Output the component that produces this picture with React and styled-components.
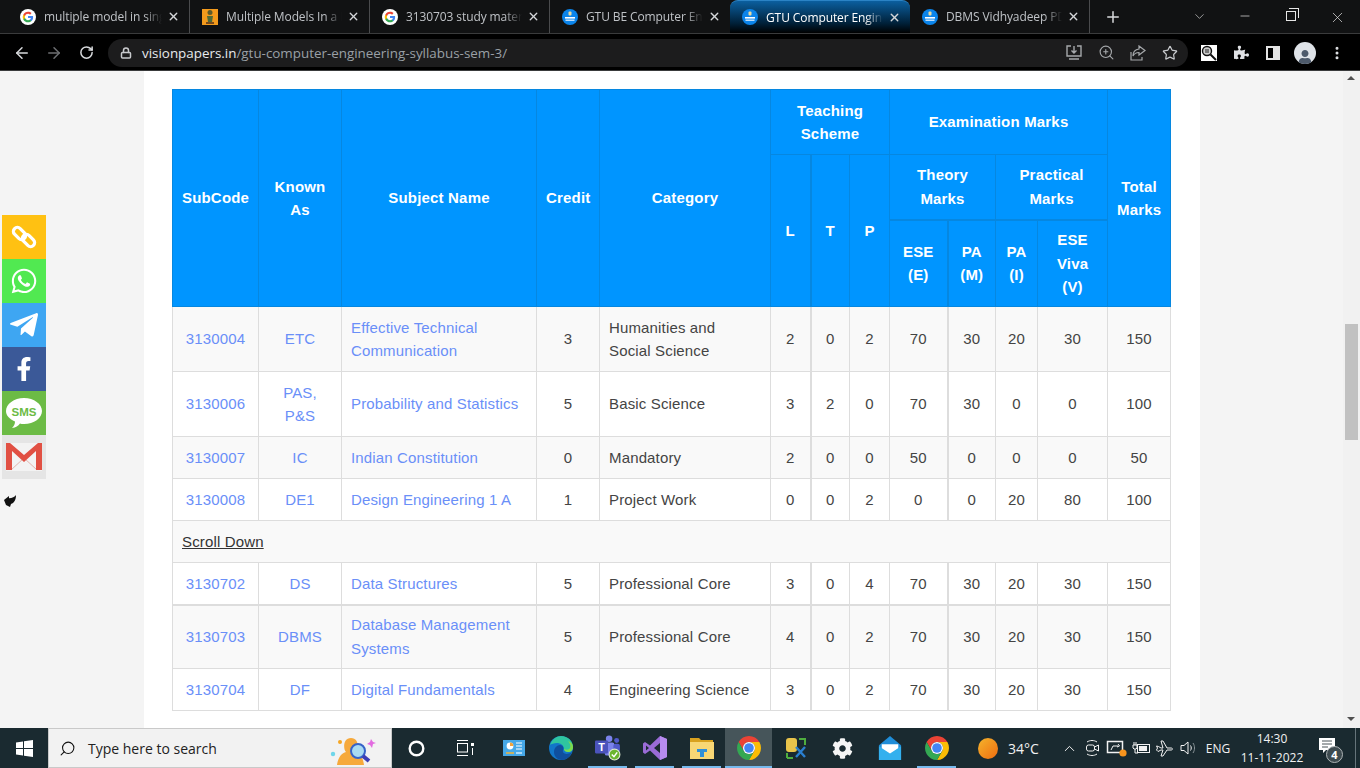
import React from 'react';
import styled, { createGlobalStyle } from 'styled-components';
import {
  ArrowLeft, ArrowRight, RotateCw, Lock, ZoomIn, Star, MoreVertical,
  ChevronUp, ChevronDown, Minus, X, Plus, Search,
} from 'lucide-react';
import { FaWhatsapp, FaTelegramPlane, FaFacebookF, FaPuzzlePiece, FaUser, FaCog } from 'react-icons/fa';

const GlobalStyle = createGlobalStyle`
  html, body { margin: 0; padding: 0; height: 100%; overflow: hidden; }
  body { font-family: "Liberation Sans", Arial, sans-serif; }
  * { box-sizing: border-box; }
`;

const Shell = styled.div`
  display: flex;
  flex-direction: column;
  width: 1360px;
  height: 768px;
`;

/* browser chrome */
const TabBar = styled.div`
  display: flex;
  align-items: stretch;
  height: 34px;
  padding-left: 10px;
  background: #111213;
  border-bottom: 1px solid #3a3b3c;
  font-family: "Open Sans", sans-serif;
`;

const Tab = styled.div`
  position: relative;
  display: flex;
  align-items: center;
  width: 180px;
  height: 33px;
  padding-left: ${p => (p.$first ? 10 : 12)}px;
  padding-right: 9px;
  color: ${p => (p.$active ? '#ffffff' : '#bfc2c6')};
  font-size: 12px;
  letter-spacing: -0.1px;
  background: ${p => (p.$active ? 'linear-gradient(#0b5f9f, #002038 70%, #000)' : 'transparent')};
  border-top: ${p => (p.$active ? '1px solid #2b83c5' : 'none')};
  border-radius: ${p => (p.$active ? '8px 8px 0 0' : '0')};
  border-right: ${p => (p.$sep ? '1px solid #4a4b4d' : 'none')};
`;

const TabIcon = styled.span`
  display: flex;
  width: 16px;
  height: 16px;
  margin-right: 8px;
  flex: none;
`;

const TabTitle = styled.span`
  flex: 1;
  min-width: 0;
  margin-right: 5px;
  overflow: hidden;
  white-space: nowrap;
  -webkit-mask-image: linear-gradient(to right, #000 85%, transparent);
  mask-image: linear-gradient(to right, #000 85%, transparent);
`;

const TabClose = styled.span`
  display: flex;
  flex: none;
  color: #d5d7da;
`;

const NewTab = styled.span`
  display: flex;
  align-items: center;
  margin-left: 14px;
  color: #d8dadd;
`;

const WindowControls = styled.div`
  display: flex;
  align-items: flex-start;
  margin-left: auto;
  color: #e6e6e6;
`;

const WinButton = styled.span`
  display: flex;
  justify-content: center;
  width: 46px;
  padding-top: 9px;
`;

const RestoreIcon = styled.span`
  position: relative;
  display: block;
  width: 10px;
  height: 10px;
  margin-top: 2px;
  border: 1px solid #e6e6e6;
  &::after {
    content: "";
    position: absolute;
    top: -4px;
    right: -4px;
    width: 9px;
    height: 9px;
    border-top: 1px solid #e6e6e6;
    border-right: 1px solid #e6e6e6;
  }
`;

const Toolbar = styled.div`
  display: flex;
  align-items: center;
  height: 37px;
  padding: 1px 0 0 6px;
  background: #000;
  border-bottom: 1px solid #3a3b3c;
  color: #d8dadd;
`;

const NavButton = styled.span`
  display: flex;
  justify-content: center;
  width: 32px;
  color: ${p => (p.$dim ? '#6d6f72' : '#d8dadd')};
`;

const Omnibox = styled.div`
  display: flex;
  align-items: center;
  flex: none;
  width: 1080px;
  height: 28px;
  margin-left: 6px;
  padding: 0 7px 0 12px;
  border-radius: 14px;
  background: #1c1c1d;
  font-family: "Open Sans", sans-serif;
  font-size: 13.4px;
  color: #9aa0a6;
`;

const Host = styled.span`
  color: #e8eaed;
`;

const Url = styled.span`
  margin-left: 10px;
  white-space: nowrap;
`;

const OmniIcons = styled.div`
  display: flex;
  align-items: center;
  gap: 10px;
  margin-left: auto;
  color: #a5a8ab;
`;

const OmniIcon = styled.span`
  display: flex;
  justify-content: center;
  width: 22px;
`;

const ToolIcons = styled.div`
  display: flex;
  align-items: center;
  margin-left: 5px;
`;

const ToolIcon = styled.span`
  display: flex;
  justify-content: center;
  align-items: center;
  width: 32px;
  color: #dfe1e4;
`;

const SidePanelIcon = styled.span`
  display: block;
  width: 14px;
  height: 14px;
  border: 2px solid #e3e3e3;
  background: linear-gradient(to right, #000 50%, #e3e3e3 50%);
`;

const Avatar = styled.span`
  display: flex;
  align-items: flex-end;
  justify-content: center;
  width: 22px;
  height: 22px;
  overflow: hidden;
  border-radius: 50%;
  background: #dfe3e8;
  color: #4d5a6b;
`;

/* page */
const Main = styled.div`
  position: relative;
  display: flex;
  flex: 1;
  min-height: 0;
  background: #f4f4f4;
`;

const Gutter = styled.div`
  flex: ${p => (p.$grow ? 1 : 'none')};
  width: 144px;
`;

const Content = styled.div`
  width: 1056px;
  padding: 18px 30px 0 28px;
  background: #fff;
  overflow: hidden;
`;

const Table = styled.table`
  width: 998px;
  table-layout: fixed;
  border-collapse: collapse;
  font-size: 15px;
  line-height: 23.5px;
  color: #444;
`;

const HeadRow = styled.tr`
  height: ${p => p.$h}px;
`;

const Th = styled.th`
  padding: ${p => (p.$heavyTop ? '7.5px 9px' : '8px 9px')};
  background: #0095ff;
  color: #fff;
  font-weight: 700;
  text-align: center;
  vertical-align: middle;
  border: 1px solid #0687e0;
  ${p => p.$heavyLeft && 'border-left-width: 2px;'}
  ${p => p.$heavyTop && 'border-top-width: 2px;'}
  letter-spacing: 0.18px;
`;

const Tr = styled.tr`
  height: ${p => p.$h}px;
  background: ${p => (p.$odd ? '#f9f9f9' : '#fff')};
  ${p => p.$heavy && 'border-top: 2px solid #dddddd;'}
`;

const Td = styled.td`
  padding: ${p => (p.$left ? '0 10px 0 9px' : '0 9px')};
  text-align: ${p => (p.$left ? 'left' : 'center')};
  vertical-align: middle;
  border: 1px solid #dddddd;
  ${p => p.$heavyLeft && 'border-left-width: 2px;'}
  letter-spacing: 0.15px;
`;

const SubjectLink = styled.a`
  color: #6a8ff8;
  text-decoration: none;
`;

const ScrollLink = styled.a`
  color: #333;
  text-decoration: underline;
`;

const ShareBar = styled.div`
  position: absolute;
  left: 2px;
  top: 144px;
  display: flex;
  flex-direction: column;
  width: 44px;
`;

const ShareButton = styled.span`
  display: flex;
  align-items: center;
  justify-content: center;
  height: 44px;
  background: ${p => p.$bg};
  color: #fff;
`;

const HideArrow = styled.span`
  position: absolute;
  left: 4px;
  top: 424px;
  display: flex;
`;

const Scrollbar = styled.div`
  position: relative;
  width: 17px;
  background: #f1f1f1;
`;

const Thumb = styled.div`
  position: absolute;
  left: 2px;
  top: 253px;
  width: 13px;
  height: 116px;
  background: #c1c1c1;
`;

const ScrollArrow = styled.span`
  position: absolute;
  left: 4px;
  ${p => (p.$up ? 'top: 5px;' : 'bottom: 7px;')}
  border-left: 4px solid transparent;
  border-right: 4px solid transparent;
  ${p => (p.$up ? 'border-bottom: 4px solid #505050;' : 'border-top: 4px solid #505050;')}
`;

/* taskbar */
const Taskbar = styled.div`
  display: flex;
  align-items: stretch;
  height: 40px;
  background: #1a2a30;
  color: #f2f2f2;
  font-family: "Open Sans", sans-serif;
  & > * { flex: none; }
`;

const StartButton = styled.span`
  display: flex;
  align-items: center;
  justify-content: center;
  width: 48px;
`;

const SearchBox = styled.div`
  display: flex;
  align-items: center;
  width: 344px;
  padding-left: 10px;
  background: #f2f2f2;
  border: 1px solid #c9c9c9;
  color: #222;
  font-size: 14px;
`;

const SearchText = styled.span`
  margin-left: 12px;
`;

const SearchArt = styled.span`
  display: flex;
  margin-left: auto;
  margin-right: 10px;
`;

const TaskSlot = styled.span`
  position: relative;
  display: flex;
  align-items: center;
  justify-content: center;
  width: ${p => p.$w || 47}px;
  background: ${p => (p.$active ? '#46555a' : 'transparent')};
  &::after {
    content: "";
    display: ${p => (p.$running ? 'block' : 'none')};
    position: absolute;
    left: ${p => (p.$active ? 0 : 4)}px;
    right: ${p => (p.$active ? 0 : 4)}px;
    bottom: 0;
    height: 2px;
    background: #76b9ed;
  }
`;

const Weather = styled.span`
  display: flex;
  align-items: center;
  gap: 10px;
  width: 97px;
  padding-left: 18px;
  font-size: 14px;
`;

const SunDot = styled.span`
  display: block;
  width: 20px;
  height: 21px;
  border-radius: 50%;
  background: linear-gradient(135deg, #f4b42c, #ef6c10);
`;

const Tray = styled.span`
  display: flex;
  align-items: center;
  justify-content: center;
  width: 24px;
  color: #f2f2f2;
`;

const Lang = styled.span`
  width: 34px;
  text-align: center;
  font-size: 12px;
  align-self: center;
`;

const Clock = styled.span`
  display: flex;
  flex-direction: column;
  justify-content: center;
  width: 74px;
  text-align: center;
  font-size: 12px;
  line-height: 19px;
  white-space: nowrap;
`;

const Notify = styled.span`
  position: relative;
  display: flex;
  align-items: center;
  width: 46px;
  padding: 0 0 4px 10px;
`;

const NotifyBadge = styled.span`
  position: absolute;
  left: 17px;
  top: 18px;
  width: 17px;
  height: 17px;
  border-radius: 50%;
  background: #3d4a4f;
  border: 1px solid #aeb4b6;
  color: #fff;
  font-size: 11px;
  font-weight: 700;
  line-height: 15px;
  text-align: center;
`;

const ShowDesktop = styled.span`
  width: 5px;
  border-left: 1px solid #66747a;
`;

/* drawn icons */
const GoogleG = () => (
  <svg width="16" height="16" viewBox="0 0 24 24">
    <circle cx="12" cy="12" r="12" fill="#fff" />
    <g transform="translate(3.4 3.4) scale(.72)">
      <path fill="#4285F4" d="M22.56 12.25c0-.78-.07-1.53-.2-2.25H12v4.26h5.92c-.26 1.37-1.04 2.53-2.21 3.31v2.77h3.57c2.08-1.92 3.28-4.74 3.28-8.09z" />
      <path fill="#34A853" d="M12 23c2.97 0 5.46-.98 7.28-2.66l-3.57-2.77c-.98.66-2.23 1.06-3.71 1.06-2.86 0-5.29-1.93-6.16-4.53H2.18v2.84C3.99 20.53 7.7 23 12 23z" />
      <path fill="#FBBC05" d="M5.84 14.09c-.22-.66-.35-1.36-.35-2.09s.13-1.43.35-2.09V7.07H2.18C1.43 8.55 1 10.22 1 12s.43 3.45 1.18 4.93l3.66-2.84z" />
      <path fill="#EA4335" d="M12 5.38c1.62 0 3.06.56 4.21 1.64l3.15-3.15C17.45 2.09 14.97 1 12 1 7.7 1 3.99 3.47 2.18 7.07l3.66 2.84c.87-2.6 3.3-4.53 6.16-4.53z" />
    </g>
  </svg>
);

const OrangeFav = () => (
  <svg width="16" height="16" viewBox="0 0 16 16">
    <rect width="16" height="16" fill="#f39a1c" />
    <rect x="5.5" y="1" width="5" height="5" rx="2.5" fill="#5d5a2a" />
    <path d="M5 7h6l-1 6H6z" fill="#4f6a38" />
    <rect x="4" y="13" width="8" height="2" fill="#7a4a1a" />
  </svg>
);

const SiteFav = () => (
  <svg width="16" height="16" viewBox="0 0 16 16">
    <circle cx="8" cy="8" r="8" fill="#0b84ea" />
    <rect x="6.5" y="2.5" width="3" height="4" rx="1" fill="#e9d9a0" />
    <rect x="3" y="8" width="10" height="1.6" fill="#fff" />
    <rect x="3.5" y="10.5" width="9" height="1.4" fill="#cfe6fb" />
  </svg>
);

const ChromeIcon = ({ size = 24 }) => (
  <svg width={size} height={size} viewBox="4 4 40 40">
    <path fill="#ea4335" d="M6.68 14A20 20 0 0 1 41.32 14H24A10 10 0 0 0 15.34 29Z" />
    <path fill="#fbbc05" d="M41.32 14A20 20 0 0 1 24 44L32.66 29A10 10 0 0 0 24 14Z" />
    <path fill="#34a853" d="M24 44A20 20 0 0 1 6.68 14L15.34 29A10 10 0 0 0 32.66 29Z" />
    <circle cx="24" cy="24" r="10" fill="#fff" />
    <circle cx="24" cy="24" r="8" fill="#4285f4" />
  </svg>
);

const WindowsLogo = () => (
  <svg width="17" height="17" viewBox="0 0 17 17" fill="#fff">
    <path d="M0 2.4 7 1.4V8H0zM8 1.3 17 0v8H8zM0 9h7v6.6l-7-1zM8 9h9v8l-9-1.3z" />
  </svg>
);

const SearchPerson = () => (
  <svg width="56" height="34" viewBox="0 0 56 34">
    <circle cx="8" cy="23" r="2.2" fill="#6fd6ea" />
    <circle cx="15" cy="11" r="2" fill="#f6a623" />
    <path d="M12 34c1-8 5-12 9-13-3-3-3-14 5-14s8 11 5 14c4 1 7 5 8 13z" fill="#f6a93b" />
    <circle cx="33" cy="20" r="7" fill="#a9dbf2" stroke="#3563c9" strokeWidth="2" />
    <path d="M38 25l6 5" stroke="#3d3fb5" strokeWidth="4" />
    <path d="M46 8l2 3 3 1-3 1-1 4-2-3-3-1 3-2z" fill="#e26be0" />
  </svg>
);

const WidgetIcon = () => (
  <svg width="22" height="16" viewBox="0 0 22 16">
    <rect width="22" height="16" fill="#46a8e8" />
    <circle cx="7" cy="6" r="3.4" fill="#fff" />
    <path d="M7 6V2.6A3.4 3.4 0 0 1 10.4 6z" fill="#f2a33a" />
    <path d="M13 3h6M13 6h6M13 9h6" stroke="#fff" strokeWidth="1.2" />
    <path d="M3 13h8" stroke="#f2b33a" strokeWidth="1.5" />
    <path d="M13 13h6" stroke="#cfeafc" strokeWidth="1.5" />
  </svg>
);

const TaskViewIcon = () => (
  <svg width="18" height="16" viewBox="0 0 18 16" fill="none" stroke="#fff">
    <path d="M1 .5h11M1 15.500h11" />
    <rect x="1.500" y="3.500" width="10" height="8.500" />
    <rect x="15" y="3" width="3" height="3" fill="#fff" stroke="none" />
    <path d="M16.500 8v7" />
  </svg>
);

const EdgeIcon = () => (
  <svg width="24" height="24" viewBox="0 0 24 24">
    <circle cx="12" cy="12" r="12" fill="#1276c9" />
    <path d="M1 9C3 3 8 0 12 0c7 0 12 5 12 11 0 3-2 5-5 5-2 0-4-1-4-3 0-4-4-6-7-6-3 0-6 1-7 2z" fill="#2fc5a0" />
    <path d="M13 24c-5 0-8-4-8-8 0-4 3-7 6-7 3 0 4 3 3 5-1 3 3 6 9 2-2 5-6 8-10 8z" fill="#0f4f9e" />
    <path d="M24 11c0 3-2 5-5 5-2 0-4-1-4-3 2 1 5 1 6-1s0-5-2-7c3 1 5 3 5 6z" fill="#7fdc4a" />
  </svg>
);

const TeamsIcon = () => (
  <svg width="26" height="26" viewBox="0 0 24 24">
    <circle cx="13" cy="3.500" r="3" fill="#7b83eb" />
    <circle cx="20" cy="5" r="2.300" fill="#5059c9" />
    <rect x="9" y="7" width="9" height="12" rx="2" fill="#7b83eb" />
    <rect x="17" y="8" width="6" height="8" rx="2" fill="#5059c9" />
    <rect x="0" y="5" width="12" height="12" rx="1" fill="#4b53bc" />
    <text x="6" y="15" textAnchor="middle" fontSize="10" fontWeight="700" fill="#fff" fontFamily="Liberation Sans">T</text>
    <circle cx="18" cy="18" r="5" fill="#6bb52f" stroke="#dfe8d0" strokeWidth="1" />
    <path d="M15.500 18l2 2 3-4" stroke="#fff" strokeWidth="1.400" fill="none" />
  </svg>
);

const VsIcon = () => (
  <svg width="24" height="24" viewBox="0 0 24 24">
    <path d="M17 0l7 3v18l-7 3-10-9.500L2 18l-2-1.500v-9L2 6l5 3.500z" fill="#9a6bd6" />
    <path d="M17 0l7 3v18l-7 3z" fill="#b78cf0" />
    <path d="M3 9.500v5L6 12zM17 7l-6 5 6 5z" fill="#1a2a30" />
  </svg>
);

const FolderIcon = () => (
  <svg width="24" height="22" viewBox="0 0 24 22">
    <path d="M0 1h9l2 2h12v6H0z" fill="#d9a21f" />
    <rect y="5" width="24" height="17" fill="#f8d775" />
    <path d="M7 12h10v3h-3v5h-4v-5H7z" fill="#2f8fd8" />
  </svg>
);

const ToolsIcon = () => (
  <svg width="24" height="24" viewBox="0 0 24 24" fill="none">
    <rect x="2" y="2" width="11" height="14" rx="3" fill="#e9c44b" />
    <path d="M15 3h6v6M3 22v-5M3 22h6" stroke="#4fae3f" strokeWidth="2" />
    <path d="M12 21l9-10M12 11l9 10" stroke="#2a7fd0" strokeWidth="2.400" />
  </svg>
);

const MailIcon = () => (
  <svg width="24" height="24" viewBox="0 0 26 26">
    <path d="M1 10 13 0l12 10v16H1z" fill="#1f8dd8" />
    <path d="M4 9h18v6l-9 5-9-5z" fill="#fff" />
    <path d="M1 11l12 8 12-8v15H1z" fill="#33b0ee" />
  </svg>
);

const BatteryTray = () => (
  <svg width="20" height="14" viewBox="0 0 20 14" fill="none" stroke="#f2f2f2">
    <rect x="6.500" y="3.500" width="12" height="8" />
    <rect x="8" y="5" width="8" height="5" fill="#f2f2f2" stroke="none" />
    <path d="M3 1v3M5 1v3M2 4h4v3l-1 1H3L2 7zM4 8v4h3" />
  </svg>
);

const MeetTray = () => (
  <svg width="18" height="18" viewBox="0 0 18 18" fill="none" stroke="#f2f2f2">
    <path d="M3 3c3-2 7-2 10 0M3 15c3 2 7 2 10 0" />
    <rect x="2.500" y="6" width="8" height="6" rx="2" />
    <path d="M10.500 8l4-2v6l-4-2" />
  </svg>
);

const UpdateTray = () => (
  <svg width="22" height="20" viewBox="0 0 22 20" fill="none" stroke="#f2f2f2">
    <path d="M1.500 3.500h15v11h-15z" strokeWidth="1.500" />
    <path d="M5 12l2-4h5M12 6l1.500 2L11 9" />
    <circle cx="17" cy="15" r="3.600" fill="#f7941d" stroke="none" />
  </svg>
);

const PlaneTray = () => (
  <svg width="18" height="18" viewBox="0 0 18 18" fill="none" stroke="#f2f2f2">
    <path d="M.5 7l2 .5L5 9h2L5 2h2l4 7h4c2 0 2 2 0 2h-4l-4 6H5l2-6H5l-3 1.500L.5 11l1-2z" />
  </svg>
);

const VolumeTray = () => (
  <svg width="18" height="18" viewBox="0 0 18 18" fill="none" stroke="#f2f2f2">
    <path d="M1 6.500h3l4-3.500v12l-4-3.500H1z" />
    <path d="M10.500 6.500c1 1.500 1 3.500 0 5" />
    <path d="M13 4c2 3 2 7 0 10" stroke="#8a9498" />
  </svg>
);

const ChatTray = () => (
  <svg width="16" height="16" viewBox="0 0 16 16">
    <path d="M0 0h16v12H7l-3 3v-3H0z" fill="#fff" />
    <path d="M3 3h10M3 6h10M3 9h6" stroke="#4a5559" />
  </svg>
);

const DownloadPage = () => (
  <svg width="16" height="16" viewBox="0 0 16 16" fill="none" stroke="#a5a8ab" strokeWidth="1.400">
    <path d="M5 1H1v10h14V1h-4M8 1v7M5.500 5.500 8 8l2.500-2.500M3 14h10" />
  </svg>
);

const ShareOut = () => (
  <svg width="16" height="16" viewBox="0 0 16 16" fill="none" stroke="#a5a8ab" strokeWidth="1.200">
    <path d="M1 7v8h11v-3M9 1l6 4.500L9 10V7.500C6 7.500 4 9 3 11c0-4 2-6.500 6-7z" />
  </svg>
);

const ProfileSearch = () => (
  <svg width="16" height="16" viewBox="0 0 16 16">
    <rect width="16" height="16" fill="#fff" />
    <circle cx="6" cy="6" r="4.500" fill="#ccc" stroke="#111" strokeWidth="1.400" />
    <path d="M4 5h4M4 7h4" stroke="#222" />
    <path d="M9.500 9.500 15 15" stroke="#111" strokeWidth="2" />
  </svg>
);

const ChainIcon = () => (
  <svg width="26" height="26" viewBox="0 0 26 26" fill="none" stroke="#fff" strokeWidth="3.200">
    <rect x="1.500" y="5.500" width="14" height="8" rx="4" transform="rotate(45 8.500 9.500)" />
    <rect x="10.500" y="12.500" width="14" height="8" rx="4" transform="rotate(45 17.500 16.500)" />
  </svg>
);

const SmsBubble = () => (
  <svg width="36" height="36" viewBox="0 0 36 36">
    <path d="M18 3c10 0 18 6 18 13s-8 13-18 13c-2 0-3 0-4-.5-2 2.500-4 4-8 4.500 2-2 3-4 3-6.500C3.500 24 0 20.500 0 16 0 9 8 3 18 3z" fill="#fff" />
    <text x="18" y="20.500" textAnchor="middle" fontSize="11.500" fontWeight="700" fill="#6cbb45" fontFamily="Liberation Sans">SMS</text>
  </svg>
);

const GmailIcon = () => (
  <svg width="36" height="28" viewBox="0 0 36 28">
    <rect width="36" height="28" fill="#f3f3f3" />
    <path d="M5 27 18 15 31 27" fill="none" stroke="#e3b3ad" strokeWidth="1" />
    <path d="M0 0h4l14 12L32 0h4v27h-6V8L18 19 6 8v19H0z" fill="#e15043" />
  </svg>
);

const HandBack = () => (
  <svg width="12" height="12" viewBox="0 0 12 12">
    <path d="M0 5 5 1v2.200C8 3 11 2 12 0c0 5-2 8-5 9l-1 3-4-2z" fill="#111" />
  </svg>
);

const tabs = [
  { title: 'multiple model in single form', icon: <GoogleG />, sep: true, first: true },
  { title: 'Multiple Models In a Django', icon: <OrangeFav />, sep: true },
  { title: '3130703 study material', icon: <GoogleG />, sep: true },
  { title: 'GTU BE Computer Engineering', icon: <SiteFav /> },
  { title: 'GTU Computer Engineering', icon: <SiteFav />, active: true },
  { title: 'DBMS Vidhyadeep PDF Notes', icon: <SiteFav />, sep: true },
];

const rows = [
  { code: '3130004', known: 'ETC', name: 'Effective Technical Communication', credit: 3, cat: 'Humanities and Social Science', m: [2, 0, 2, 70, 30, 20, 30, 150], h: 65 },
  { code: '3130006', known: 'PAS, P&S', name: 'Probability and Statistics', credit: 5, cat: 'Basic Science', m: [3, 2, 0, 70, 30, 0, 0, 100], h: 65 },
  { code: '3130007', known: 'IC', name: 'Indian Constitution', credit: 0, cat: 'Mandatory', m: [2, 0, 0, 50, 0, 0, 0, 50], h: 42 },
  { code: '3130008', known: 'DE1', name: 'Design Engineering 1 A', credit: 1, cat: 'Project Work', m: [0, 0, 2, 0, 0, 20, 80, 100], h: 42 },
  { scroll: true, h: 42 },
  { code: '3130702', known: 'DS', name: 'Data Structures', credit: 5, cat: 'Professional Core', m: [3, 0, 4, 70, 30, 20, 30, 150], h: 42 },
  { code: '3130703', known: 'DBMS', name: 'Database Management Systems', credit: 5, cat: 'Professional Core', m: [4, 0, 2, 70, 30, 20, 30, 150], h: 64, heavy: true },
  { code: '3130704', known: 'DF', name: 'Digital Fundamentals', credit: 4, cat: 'Engineering Science', m: [3, 0, 2, 70, 30, 20, 30, 150], h: 42 },
];

const colWidths = [86, 83, 195, 63, 171, 40, 39, 40, 58, 48, 42, 70, 63];

function SyllabusTable() {
  return (
    <Table>
      <colgroup>
        {colWidths.map((w, i) => <col key={i} width={w} />)}
      </colgroup>
      <thead>
        <HeadRow $h={65}>
          <Th rowSpan={3}>SubCode</Th>
          <Th rowSpan={3}>Known As</Th>
          <Th rowSpan={3}>Subject Name</Th>
          <Th rowSpan={3}>Credit</Th>
          <Th rowSpan={3}>Category</Th>
          <Th colSpan={3}>Teaching Scheme</Th>
          <Th colSpan={4}>Examination Marks</Th>
          <Th rowSpan={3}>Total Marks</Th>
        </HeadRow>
        <HeadRow $h={65}>
          <Th rowSpan={2}>L</Th>
          <Th rowSpan={2} $heavyLeft>T</Th>
          <Th rowSpan={2}>P</Th>
          <Th colSpan={2}>Theory Marks</Th>
          <Th colSpan={2}>Practical Marks</Th>
        </HeadRow>
        <HeadRow $h={87}>
          <Th $heavyTop>ESE (E)</Th>
          <Th $heavyTop $heavyLeft>PA (M)</Th>
          <Th $heavyTop>PA (I)</Th>
          <Th $heavyTop>ESE Viva (V)</Th>
        </HeadRow>
      </thead>
      <tbody>
        {rows.map((r, i) => (
          r.scroll ? (
            <Tr key={i} $h={r.h} $odd={i % 2 === 0}>
              <Td colSpan={13} $left><ScrollLink href="#">Scroll Down</ScrollLink></Td>
            </Tr>
          ) : (
            <Tr key={i} $h={r.h} $odd={i % 2 === 0} $heavy={r.heavy}>
              <Td><SubjectLink href="#">{r.code}</SubjectLink></Td>
              <Td><SubjectLink href="#">{r.known}</SubjectLink></Td>
              <Td $left><SubjectLink href="#">{r.name}</SubjectLink></Td>
              <Td>{r.credit}</Td>
              <Td $left>{r.cat}</Td>
              {r.m.map((v, j) => <Td key={j} $heavyLeft={j === 1 || j === 4}>{v}</Td>)}
            </Tr>
          )
        ))}
      </tbody>
    </Table>
  );
}

export default function App() {
  return (
    <Shell>
      <GlobalStyle />
      <TabBar>
        {tabs.map((t, i) => (
          <Tab key={i} $active={t.active} $sep={t.sep} $first={t.first}>
            <TabIcon>{t.icon}</TabIcon>
            <TabTitle>{t.title}</TabTitle>
            <TabClose><X size={13} strokeWidth={2.5} /></TabClose>
          </Tab>
        ))}
        <NewTab><Plus size={18} strokeWidth={2} /></NewTab>
        <WindowControls>
          <WinButton><ChevronDown size={15} strokeWidth={1} /></WinButton>
          <WinButton><Minus size={14} strokeWidth={1.2} /></WinButton>
          <WinButton><RestoreIcon /></WinButton>
          <WinButton><X size={17} strokeWidth={1} /></WinButton>
        </WindowControls>
      </TabBar>
      <Toolbar>
        <NavButton><ArrowLeft size={18} strokeWidth={2} /></NavButton>
        <NavButton $dim><ArrowRight size={18} strokeWidth={2} /></NavButton>
        <NavButton><RotateCw size={15} strokeWidth={2.4} /></NavButton>
        <Omnibox>
          <Lock size={12} strokeWidth={3} color="#c8cacd" />
          <Url><Host>visionpapers.in</Host>/gtu-computer-engineering-syllabus-sem-3/</Url>
          <OmniIcons>
            <OmniIcon><DownloadPage /></OmniIcon>
            <OmniIcon><ZoomIn size={17} strokeWidth={1.6} /></OmniIcon>
            <OmniIcon><ShareOut /></OmniIcon>
            <OmniIcon><Star size={16} strokeWidth={1.8} color="#c8cacd" /></OmniIcon>
          </OmniIcons>
        </Omnibox>
        <ToolIcons>
          <ToolIcon><ProfileSearch /></ToolIcon>
          <ToolIcon><FaPuzzlePiece size={15} /></ToolIcon>
          <ToolIcon><SidePanelIcon /></ToolIcon>
          <ToolIcon><Avatar><FaUser size={14} /></Avatar></ToolIcon>
          <ToolIcon><MoreVertical size={16} strokeWidth={2.5} /></ToolIcon>
        </ToolIcons>
      </Toolbar>
      <Main>
        <Gutter />
        <Content><SyllabusTable /></Content>
        <Gutter $grow />
        <Scrollbar>
          <ScrollArrow $up />
          <Thumb />
          <ScrollArrow />
        </Scrollbar>
        <ShareBar>
          <ShareButton $bg="#ffc112"><ChainIcon /></ShareButton>
          <ShareButton $bg="#51e951"><FaWhatsapp size={28} /></ShareButton>
          <ShareButton $bg="#3ea6f2"><FaTelegramPlane size={32} /></ShareButton>
          <ShareButton $bg="#3b5998"><FaFacebookF size={24} /></ShareButton>
          <ShareButton $bg="#6cbb45"><SmsBubble /></ShareButton>
          <ShareButton $bg="#e5e5e5"><GmailIcon /></ShareButton>
        </ShareBar>
        <HideArrow><HandBack /></HideArrow>
      </Main>
      <Taskbar>
        <StartButton><WindowsLogo /></StartButton>
        <SearchBox>
          <Search size={17} strokeWidth={1.5} color="#111" style={{ transform: 'scaleX(-1)' }} />
          <SearchText>Type here to search</SearchText>
          <SearchArt><SearchPerson /></SearchArt>
        </SearchBox>
        <TaskSlot $w={48}><svg width="17" height="17" viewBox="0 0 17 17"><circle cx="8.500" cy="8.500" r="6.800" fill="none" stroke="#fff" strokeWidth="2.400" /></svg></TaskSlot>
        <TaskSlot $w={50}><TaskViewIcon /></TaskSlot>
        <TaskSlot><WidgetIcon /></TaskSlot>
        <TaskSlot><EdgeIcon /></TaskSlot>
        <TaskSlot $running><TeamsIcon /></TaskSlot>
        <TaskSlot $running><VsIcon /></TaskSlot>
        <TaskSlot $running><FolderIcon /></TaskSlot>
        <TaskSlot $running $active><ChromeIcon /></TaskSlot>
        <TaskSlot><ToolsIcon /></TaskSlot>
        <TaskSlot><FaCog size={21} color="#f5f5f5" /></TaskSlot>
        <TaskSlot><MailIcon /></TaskSlot>
        <TaskSlot $running><ChromeIcon /></TaskSlot>
        <Weather><SunDot />34°C</Weather>
        <Tray><ChevronUp size={17} strokeWidth={1.4} /></Tray>
        <Tray><MeetTray /></Tray>
        <Tray><UpdateTray /></Tray>
        <Tray><BatteryTray /></Tray>
        <Tray><PlaneTray /></Tray>
        <Tray><VolumeTray /></Tray>
        <Lang>ENG</Lang>
        <Clock><span>14:30</span><span>11-11-2022</span></Clock>
        <Notify><ChatTray /><NotifyBadge>4</NotifyBadge></Notify>
        <ShowDesktop />
      </Taskbar>
    </Shell>
  );
}
